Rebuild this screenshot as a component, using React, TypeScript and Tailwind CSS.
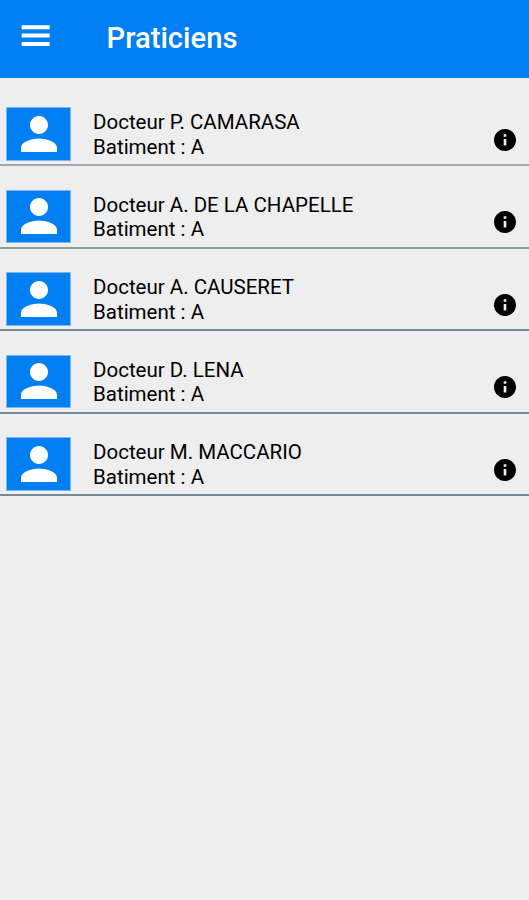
import React from 'react';

const doctors = [
  { name: 'Docteur P. CAMARASA', line: 'border-[#a6a9ac]' },
  { name: 'Docteur A. DE LA CHAPELLE', line: 'border-[#8a9f9e]' },
  { name: 'Docteur A. CAUSERET', line: 'border-[#758a96]' },
  { name: 'Docteur D. LENA', line: 'border-[#758a96]' },
  { name: 'Docteur M. MACCARIO', line: 'border-[#758a96]' },
];

export default function App() {
  return (
    <div className="flex h-[900px] w-[529px] flex-col bg-[#eeeeee] font-['Roboto',sans-serif] text-black">
      <header className="flex h-[78px] shrink-0 items-center bg-[#007ff2] text-white">
        <button aria-label="Menu" className="mb-[7px] ml-[15px]">
          <svg viewBox="0 0 24 24" className="h-[41px] w-[41px] fill-current">
            <path d="M3.9 18.1h16.4v-2.3H3.9zM3.9 13.2h16.4v-2.3H3.9zM3.9 6v2.3h16.4V6z" />
          </svg>
        </button>
        <h1 className="ml-[50.5px] text-[29.2px] leading-none font-medium">Praticiens</h1>
      </header>
      <ul className="pt-[5.5px]">
        {doctors.map(({ name, line }) => (
          <li key={name} className={`flex h-[82.5px] border-b-2 ${line}`}>
            <div className="mt-[23.5px] ml-[6px] flex h-[53.5px] w-[65px] items-center justify-center border border-[#7db7f0] bg-[#007ff2]">
              <svg viewBox="4 4 16 16" className="h-[36px] w-[36px] fill-white">
                <path d="M12 12c2.21 0 4-1.79 4-4s-1.79-4-4-4-4 1.79-4 4 1.79 4 4 4zm0 2c-2.67 0-8 1.34-8 4v2h16v-2c0-2.66-5.33-4-8-4z" />
              </svg>
            </div>
            <div className="mt-[26.5px] ml-[22px] grow text-[20.5px] leading-[24.5px]">
              <p>{name}</p>
              <p>Batiment : A</p>
            </div>
            <svg viewBox="2 2 20 20" className="mt-[45px] mr-[13px] h-[22px] w-[22px] fill-black">
              <path d="M12 2C6.48 2 2 6.48 2 12s4.48 10 10 10 10-4.48 10-10S17.52 2 12 2zm1.2 15h-2.4v-6h2.4v6zm0-8h-2.4V6.7h2.4V9z" />
            </svg>
          </li>
        ))}
      </ul>
    </div>
  );
}
